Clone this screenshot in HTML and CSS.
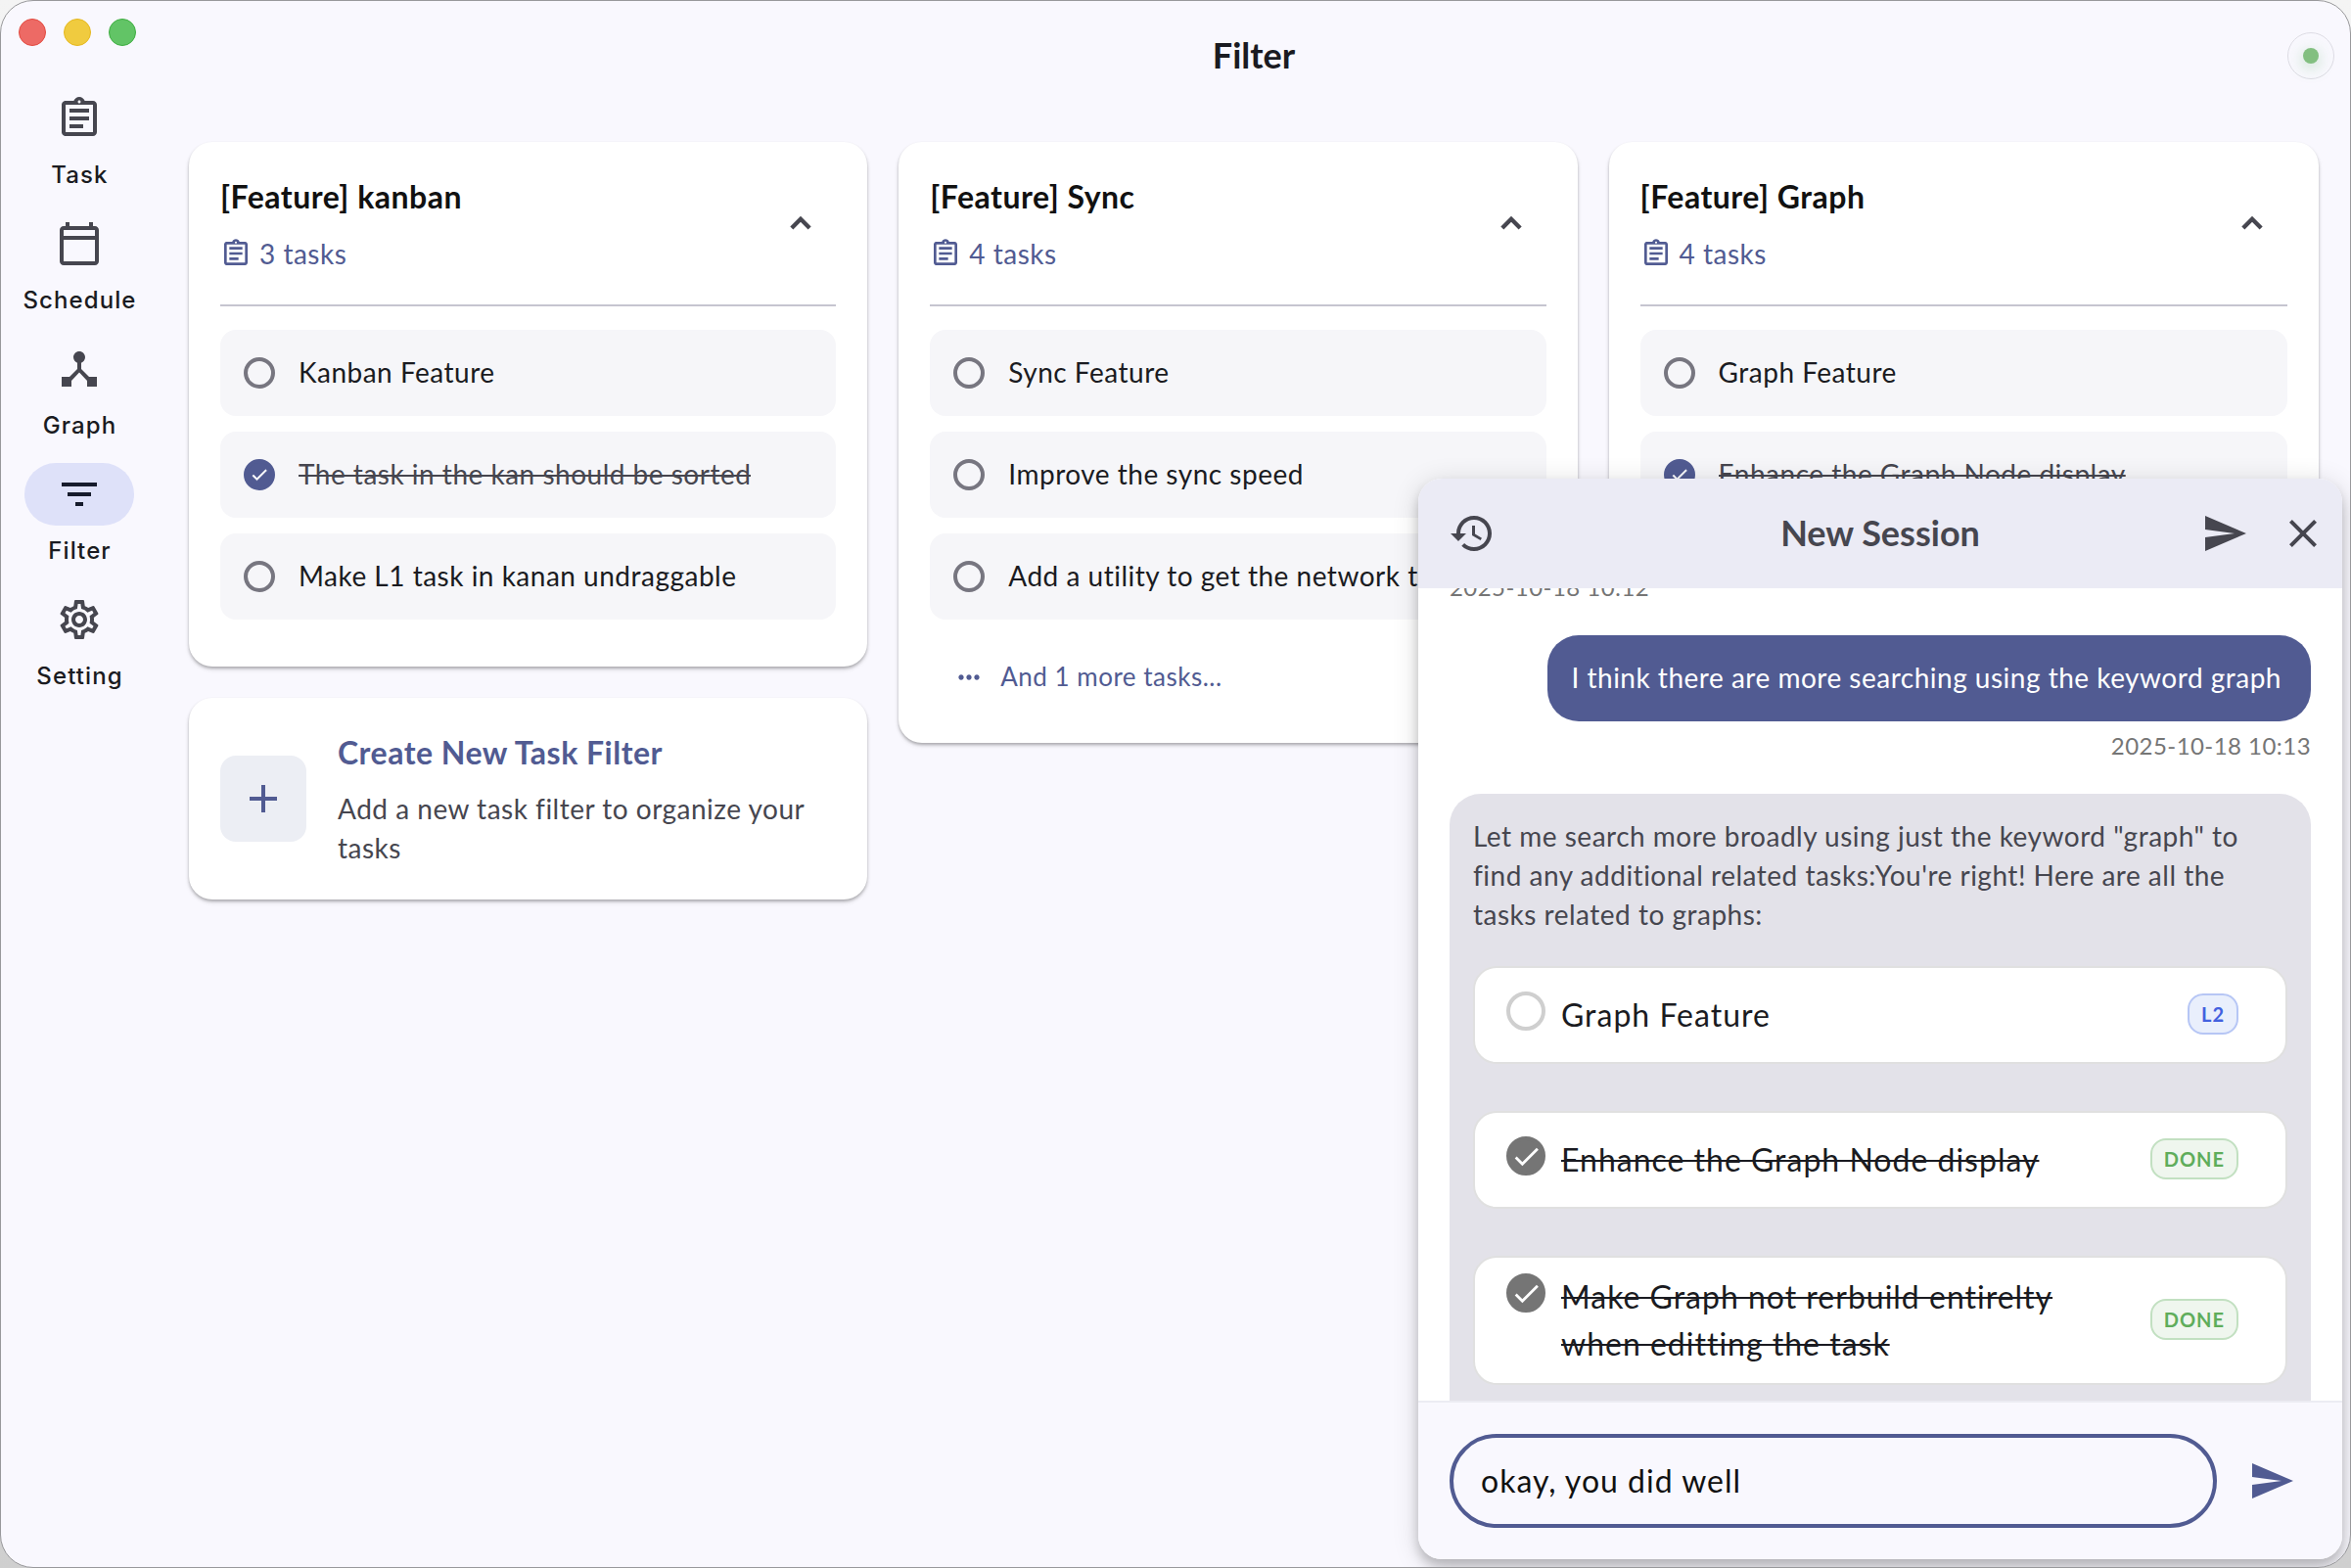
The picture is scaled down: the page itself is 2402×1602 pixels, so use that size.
FILE: index.html
```html
<!DOCTYPE html>
<html lang="en">
<head>
<meta charset="utf-8">
<title>Filter</title>
<link rel="stylesheet" href="styles.css">
</head>
<body>
<svg class="defs" width="0" height="0" aria-hidden="true">
  <symbol id="i-task" viewBox="0 0 24 24"><path d="M7 15h7v2H7zm0-4h10v2H7zm0-4h10v2H7zm12-4h-4.18C14.4 1.84 13.3 1 12 1c-1.3 0-2.4.84-2.82 2H5c-.14 0-.27.01-.4.04-.39.08-.74.28-1.01.55-.18.18-.33.4-.43.64-.1.23-.16.49-.16.77v14c0 .27.06.54.16.78s.25.45.43.64c.27.27.62.47 1.01.55.13.02.26.03.4.03h14c1.1 0 2-.9 2-2V5c0-1.1-.9-2-2-2zm-7-.25c.41 0 .75.34.75.75s-.34.75-.75.75-.75-.34-.75-.75.34-.75.75-.75zM19 19H5V5h14v14z"/></symbol>
  <symbol id="i-calendar" viewBox="0 0 24 24"><path d="M20 3h-1V1h-2v2H7V1H5v2H4c-1.1 0-2 .9-2 2v16c0 1.1.9 2 2 2h16c1.100 0 2-.9 2-2V5c0-1.100-.9-2-2-2zm0 18H4V10h16v11zm0-13H4V5h16v3z"/></symbol>
  <symbol id="i-graph" viewBox="0 0 24 24"><path d="M17 16l-4-4V8.820C14.160 8.400 15 7.300 15 6c0-1.660-1.340-3-3-3S9 4.340 9 6c0 1.300.840 2.400 2 2.820V12l-4 4H3v5h5v-3.050l4-4.200 4 4.200V21h5v-5h-4z"/></symbol>
  <symbol id="i-filter" viewBox="0 0 24 24"><path d="M10 18h4v-2h-4v2zM3 6v2h18V6H3zm3 7h12v-2H6v2z"/></symbol>
  <symbol id="i-settings" viewBox="0 0 24 24"><path d="M19.430 12.980c.04-.32.07-.64.07-.98 0-.34-.03-.66-.07-.98l2.110-1.650c.19-.15.24-.42.12-.64l-2-3.460c-.09-.16-.26-.25-.44-.25-.06 0-.12.01-.17.03l-2.490 1c-.52-.4-1.080-.73-1.690-.98l-.38-2.650C14.460 2.180 14.250 2 14 2h-4c-.25 0-.46.18-.49.42l-.38 2.650c-.61.25-1.170.59-1.690.98l-2.490-1c-.06-.02-.12-.03-.18-.03-.17 0-.34.09-.43.25l-2 3.460c-.13.22-.07.49.12.64l2.110 1.650c-.04.32-.07.65-.07.98 0 .33.03.66.07.98l-2.110 1.650c-.19.15-.24.42-.12.64l2 3.460c.09.16.26.25.44.25.06 0 .12-.01.17-.03l2.490-1c.52.4 1.080.73 1.690.98l.38 2.650c.03.24.24.42.49.42h4c.25 0 .46-.18.49-.42l.38-2.650c.61-.25 1.170-.59 1.690-.98l2.490 1c.06.02.12.03.18.03.17 0 .34-.09.43-.25l2-3.460c.12-.22.07-.49-.12-.64l-2.110-1.650zm-1.980-1.710c.04.31.05.52.05.73 0 .21-.02.43-.05.73l-.14 1.130.89.7 1.080.84-.7 1.210-1.270-.51-1.040-.42-.9.68c-.43.32-.84.56-1.250.73l-1.060.43-.16 1.130-.2 1.350h-1.400l-.19-1.350-.16-1.130-1.060-.43c-.43-.18-.83-.41-1.230-.71l-.91-.7-1.060.43-1.270.51-.7-1.210 1.080-.84.89-.7-.14-1.130c-.03-.31-.05-.54-.05-.74s.02-.43.05-.73l.14-1.130-.89-.7-1.080-.84.7-1.210 1.270.51 1.040.42.9-.68c.43-.32.84-.56 1.250-.73l1.060-.43.16-1.130.2-1.350h1.390l.19 1.350.16 1.130 1.060.43c.43.18.83.41 1.230.71l.91.7 1.060-.43 1.270-.51.7 1.210-1.070.85-.89.7.14 1.130zM12 8c-2.210 0-4 1.790-4 4s1.790 4 4 4 4-1.790 4-4-1.790-4-4-4zm0 6c-1.100 0-2-.9-2-2s.9-2 2-2 2 .9 2 2-.9 2-2 2z"/></symbol>
  <symbol id="i-history" viewBox="0 0 24 24"><path d="M13 3c-4.970 0-9 4.030-9 9H1l3.890 3.890.07.14L9 12H6c0-3.870 3.130-7 7-7s7 3.130 7 7-3.130 7-7 7c-1.930 0-3.680-.79-4.940-2.060l-1.420 1.420C8.270 19.990 10.510 21 13 21c4.970 0 9-4.030 9-9s-4.030-9-9-9zm-1 5v5l4.280 2.540.72-1.210-3.500-2.080V8H12z"/></symbol>
  <symbol id="i-send" viewBox="0 0 24 24"><path d="M2.010 21L23 12 2.010 3 2 10l15 2-15 2z"/></symbol>
  <symbol id="i-close" viewBox="0 0 24 24"><path d="M19 6.410L17.590 5 12 10.590 6.410 5 5 6.410 10.590 12 5 17.590 6.410 19 12 13.410 17.590 19 19 17.590 13.410 12z"/></symbol>
  <symbol id="i-add" viewBox="0 0 24 24"><path d="M19 13h-6v6h-2v-6H5v-2h6V5h2v6h6v2z"/></symbol>
  <symbol id="i-more" viewBox="0 0 24 24"><path d="M6 10c-1.100 0-2 .9-2 2s.9 2 2 2 2-.9 2-2-.9-2-2-2zm12 0c-1.100 0-2 .9-2 2s.9 2 2 2 2-.9 2-2-.9-2-2-2zm-6 0c-1.100 0-2 .9-2 2s.9 2 2 2 2-.9 2-2-.9-2-2-2z"/></symbol>
  <symbol id="i-check" viewBox="0 0 24 24"><path d="M9 16.170L4.830 12l-1.420 1.410L9 19 21 7l-1.410-1.410z"/></symbol>
  <symbol id="i-up" viewBox="0 0 24 24"><path d="M5.900 15.300L12 9.200l6.100 6.100" fill="none" stroke="currentColor" stroke-width="2.900"/></symbol>
</svg>

<div class="window">
  <div class="lights"><i class="light red"></i><i class="light yellow"></i><i class="light green"></i></div>

  <nav class="rail">
    <a class="rail-item"><span class="pill"><svg class="icon"><use href="#i-task"/></svg></span><span class="rail-label">Task</span></a>
    <a class="rail-item"><span class="pill"><svg class="icon"><use href="#i-calendar"/></svg></span><span class="rail-label">Schedule</span></a>
    <a class="rail-item"><span class="pill"><svg class="icon"><use href="#i-graph"/></svg></span><span class="rail-label">Graph</span></a>
    <a class="rail-item active"><span class="pill"><svg class="icon"><use href="#i-filter"/></svg></span><span class="rail-label">Filter</span></a>
    <a class="rail-item"><span class="pill"><svg class="icon"><use href="#i-settings"/></svg></span><span class="rail-label">Setting</span></a>
  </nav>

  <main class="page">
    <header class="appbar"><h1 class="page-title">Filter</h1><span class="status"><i class="status-dot"></i></span></header>

    <div class="columns">
      <div class="column">
        <section class="card">
          <header class="card-head">
            <div class="card-heading">
              <h2 class="card-title">[Feature] kanban</h2>
              <p class="count"><svg class="icon-sm"><use href="#i-task"/></svg><span class="count-text">3 tasks</span></p>
            </div>
            <span class="collapse"><svg class="icon-up"><use href="#i-up"/></svg></span>
          </header>
          <ul class="tasks">
            <li class="task"><i class="radio"></i><span class="task-name">Kanban Feature</span></li>
            <li class="task done"><i class="radio"><svg class="tick"><use href="#i-check"/></svg></i><span class="task-name">The task in the kan should be sorted</span></li>
            <li class="task"><i class="radio"></i><span class="task-name">Make L1 task in kanan undraggable</span></li>
          </ul>
        </section>
        <section class="card create">
          <span class="create-icon"><svg class="icon"><use href="#i-add"/></svg></span>
          <div class="create-text">
            <h2 class="create-title">Create New Task Filter</h2>
            <p class="create-desc">Add a new task filter to organize your tasks</p>
          </div>
        </section>
      </div>

      <div class="column">
        <section class="card">
          <header class="card-head">
            <div class="card-heading">
              <h2 class="card-title">[Feature] Sync</h2>
              <p class="count"><svg class="icon-sm"><use href="#i-task"/></svg><span class="count-text">4 tasks</span></p>
            </div>
            <span class="collapse"><svg class="icon-up"><use href="#i-up"/></svg></span>
          </header>
          <ul class="tasks">
            <li class="task"><i class="radio"></i><span class="task-name">Sync Feature</span></li>
            <li class="task"><i class="radio"></i><span class="task-name">Improve the sync speed</span></li>
            <li class="task"><i class="radio"></i><span class="task-name">Add a utility to get the network time</span></li>
          </ul>
          <p class="more"><svg class="icon-sm"><use href="#i-more"/></svg><span class="count-text">And 1 more tasks...</span></p>
        </section>
      </div>

      <div class="column wide">
        <section class="card">
          <header class="card-head">
            <div class="card-heading">
              <h2 class="card-title">[Feature] Graph</h2>
              <p class="count"><svg class="icon-sm"><use href="#i-task"/></svg><span class="count-text">4 tasks</span></p>
            </div>
            <span class="collapse"><svg class="icon-up"><use href="#i-up"/></svg></span>
          </header>
          <ul class="tasks">
            <li class="task"><i class="radio"></i><span class="task-name">Graph Feature</span></li>
            <li class="task done"><i class="radio"><svg class="tick"><use href="#i-check"/></svg></i><span class="task-name">Enhance the Graph Node display</span></li>
          </ul>
        </section>
      </div>
    </div>
  </main>

  <aside class="chat">
    <header class="chat-head">
      <svg class="icon history"><use href="#i-history"/></svg>
      <h2 class="chat-title">New Session</h2>
      <span class="chat-actions"><svg class="icon"><use href="#i-send"/></svg><svg class="icon"><use href="#i-close"/></svg></span>
    </header>
    <div class="chat-body">
      <time class="stamp">2025-10-18 10:12</time>
      <div class="bubble mine">I think there are more searching using the keyword graph</div>
      <time class="stamp right">2025-10-18 10:13</time>
      <div class="bubble reply">
        <p class="reply-text">Let me search more broadly using just the keyword "graph" to find any additional related tasks:You're right! Here are all the tasks related to graphs:</p>
        <div class="result"><div class="result-main"><i class="ring"></i><span class="result-name">Graph Feature</span></div><span class="badge level">L2</span></div>
        <div class="result checked"><div class="result-main"><i class="ring"><svg class="ring-tick"><use href="#i-check"/></svg></i><span class="result-name">Enhance the Graph Node display</span></div><span class="badge ok">DONE</span></div>
        <div class="result checked"><div class="result-main"><i class="ring"><svg class="ring-tick"><use href="#i-check"/></svg></i><span class="result-name">Make Graph not rerbuild entirelty when editting the task</span></div><span class="badge ok">DONE</span></div>
      </div>
    </div>
    <footer class="composer">
      <div class="field">okay, you did well</div>
      <svg class="icon send"><use href="#i-send"/></svg>
    </footer>
  </aside>
</div>
</body>
</html>
```
FILE: styles.css
```css
* { box-sizing: border-box; margin: 0; padding: 0; }

body {
  width: 2402px;
  height: 1602px;
  overflow: hidden;
  background: linear-gradient(#f4f4f4, #cfcfcf);
  font-family: Lato, "Liberation Sans", sans-serif;
  font-size: 28px;
  line-height: 40px;
  letter-spacing: 0.5px;
  color: #1a1b21;
}

.defs { position: absolute; }
svg { display: block; fill: currentColor; flex: none; }
ul { list-style: none; }
.icon { width: 48px; height: 48px; }
.icon-sm { width: 32px; height: 32px; }

.window {
  position: relative;
  display: flex;
  width: 2402px;
  height: 1602px;
  border: 1px solid #98989b;
  border-radius: 34px;
  background: #f9f8fe;
  overflow: hidden;
}

.lights { position: absolute; left: 18px; top: 18px; display: flex; gap: 18px; }
.light { width: 28px; height: 28px; border-radius: 50%; border: 1px solid; }
.light.red { background: #ed6a65; border-color: #e24b41; }
.light.yellow { background: #f0cb3f; border-color: #e5b81f; }
.light.green { background: #62c466; border-color: #3fae42; }

/* Navigation rail */
.rail { width: 160px; flex: none; padding-top: 88px; display: flex; flex-direction: column; }
.rail-item { height: 128px; display: flex; flex-direction: column; align-items: center; color: #46464f; }
.pill { width: 112px; height: 64px; border-radius: 32px; display: flex; align-items: center; justify-content: center; }
.rail-label {
  margin-top: 10px;
  padding-left: 1px;
  font: 500 24px/32px Inter, sans-serif;
  letter-spacing: 1.1px;
  color: #1a1b21;
}
.active .pill { background: #dee1f9; color: #161b2c; }

/* Page */
.page { flex: 1; min-width: 0; }
.appbar { height: 112px; display: grid; grid-template-columns: 1fr auto 1fr; align-items: center; }
.page-title { grid-column: 2; padding-bottom: 2px; font-size: 36px; line-height: 48px; font-weight: 700; letter-spacing: 0; }
.status {
  justify-self: end;
  margin-right: 16px;
  width: 48px;
  height: 48px;
  border: 1px solid #dddce4;
  border-radius: 50%;
  display: flex;
  align-items: center;
  justify-content: center;
}
.status-dot { width: 16px; height: 16px; border-radius: 50%; background: #82bf80; box-shadow: 0 4px 16px rgba(76, 175, 80, 0.35); }

.columns { display: flex; align-items: flex-start; gap: 32px; padding: 32px 32px 0; }
.column { width: 693.3px; display: flex; flex-direction: column; gap: 32px; }
.column.wide { width: 725.3px; }
.card {
  padding: 32px;
  border-radius: 24px;
  background: #fff;
  box-shadow: 0 2px 3px rgba(0, 0, 0, 0.24), 0 3px 5px rgba(0, 0, 0, 0.1);
}
.card-head {
  display: flex;
  align-items: center;
  justify-content: space-between;
  height: 136px;
  padding-bottom: 32px;
  border-bottom: 2px solid #c6c5d0;
}
.card-title { font-size: 32px; line-height: 48px; font-weight: 700; letter-spacing: 0.5px; color: #111; }
.count { display: flex; align-items: center; gap: 8px; margin-top: 14px; color: #515b92; }
.count-text { padding-bottom: 2px; margin-bottom: -1px; }
.collapse { width: 72px; display: flex; justify-content: center; color: #46464f; }
.icon-up { width: 36px; height: 36px; }

.tasks { display: flex; flex-direction: column; gap: 16px; padding: 24px 0 16px; }
.task { display: flex; align-items: center; gap: 24px; height: 88px; padding: 0 24px; border-radius: 16px; background: #f6f6f9; }
.task-name { padding-bottom: 2px; white-space: nowrap; overflow: hidden; text-overflow: ellipsis; }
.radio { flex: none; width: 32px; height: 32px; border: 4px solid #777680; border-radius: 50%; display: flex; align-items: center; justify-content: center; }
.done .radio { background: #515b92; border-color: #515b92; color: #fff; }
.tick { width: 20px; height: 20px; stroke: #fff; stroke-width: 0.6px; }
.done .task-name { color: #46464f; text-decoration: line-through; text-decoration-thickness: 2px; }

.more { display: flex; align-items: center; gap: 16px; height: 78px; padding: 7px 24px 0; font-size: 26px; color: #515b92; }

.create { display: flex; align-items: center; gap: 32px; height: 206px; }
.create-icon { flex: none; width: 88px; height: 88px; border-radius: 16px; background: #eceef4; color: #515b92; display: flex; align-items: center; justify-content: center; }
.create-title { font-size: 32px; line-height: 48px; font-weight: 700; letter-spacing: 0.5px; color: #515b92; }
.create-desc { margin: 13px 0 1px; color: #46464f; }

/* Chat window */
.chat {
  position: absolute;
  left: 1448px;
  top: 488px;
  width: 944px;
  height: 1104px;
  display: flex;
  flex-direction: column;
  border-radius: 24px;
  background: #fff;
  box-shadow: 0 8px 12px rgba(0, 0, 0, 0.2), 0 4px 28px rgba(0, 0, 0, 0.14);
  overflow: hidden;
}
.chat-head {
  flex: none;
  height: 112px;
  padding: 0 32px;
  display: grid;
  grid-template-columns: 1fr auto 1fr;
  align-items: center;
  background: #ebebf5;
  color: #46464f;
}
.history { margin-left: -1px; }
.chat-title { padding-bottom: 2px; font-size: 36px; line-height: 48px; font-weight: 700; letter-spacing: 0; }
.chat-actions { display: flex; gap: 32px; justify-content: flex-end; margin-right: -16px; }

.chat-body { flex: 1; min-height: 0; overflow: hidden; display: flex; flex-direction: column; padding: 0 32px; }
.stamp { flex: none; margin-top: -17px; font-size: 24px; line-height: 32px; letter-spacing: 0.45px; color: #757575; }
.stamp.right { align-self: flex-end; margin-top: 9px; }
.bubble { flex: none; border-radius: 32px; padding: 23px 24px; }
.mine { align-self: flex-end; margin-top: 33px; height: 88px; background: #515b92; color: #fff; white-space: nowrap; padding-right: 30px; }
.reply { margin-top: 33px; padding-bottom: 60px; background: #e3e2e9; display: flex; flex-direction: column; gap: 48px; }
.reply-text { color: #46464f; margin-bottom: -15px; }
.result {
  display: flex;
  align-items: center;
  gap: 24px;
  min-height: 100px;
  padding: 16px 48px 16px 32px;
  border: 2px solid #e0e0e0;
  border-radius: 24px;
  background: #fff;
}
.result-main { flex: 1; display: flex; align-items: flex-start; gap: 16px; }
.ring { flex: none; width: 40px; height: 40px; border: 4px solid #cfcfcf; border-radius: 50%; display: flex; align-items: center; justify-content: center; }
.checked .ring { background: #757575; border-color: #757575; color: #fff; }
.ring-tick { width: 33px; height: 33px; }
.result-name { font-size: 32px; line-height: 48px; letter-spacing: 1px; }
.checked .result-name { text-decoration: line-through; text-decoration-thickness: 2px; }
.badge { margin-top: -2px; height: 42px; padding: 0 12px; border: 2px solid; border-radius: 16px; font-size: 20px; line-height: 38px; font-weight: 700; letter-spacing: 1px; }
.level { color: #4361df; background: #e9effc; border-color: #b6c6f5; }
.ok { color: #5fad5b; background: #eff6ee; border-color: #c2e0c1; }

.composer { flex: none; height: 162px; padding: 32px 48px 32px 32px; border-top: 2px solid #ececf3; background: #f9f8fe; display: flex; justify-content: space-between; align-items: flex-start; }
.field { width: 784px; height: 96px; padding: 20px 28px; border: 4px solid #515b92; border-radius: 48px; font-size: 32px; line-height: 48px; letter-spacing: 1px; color: #111; }
.send { margin-top: 24px; color: #515b92; }
```
